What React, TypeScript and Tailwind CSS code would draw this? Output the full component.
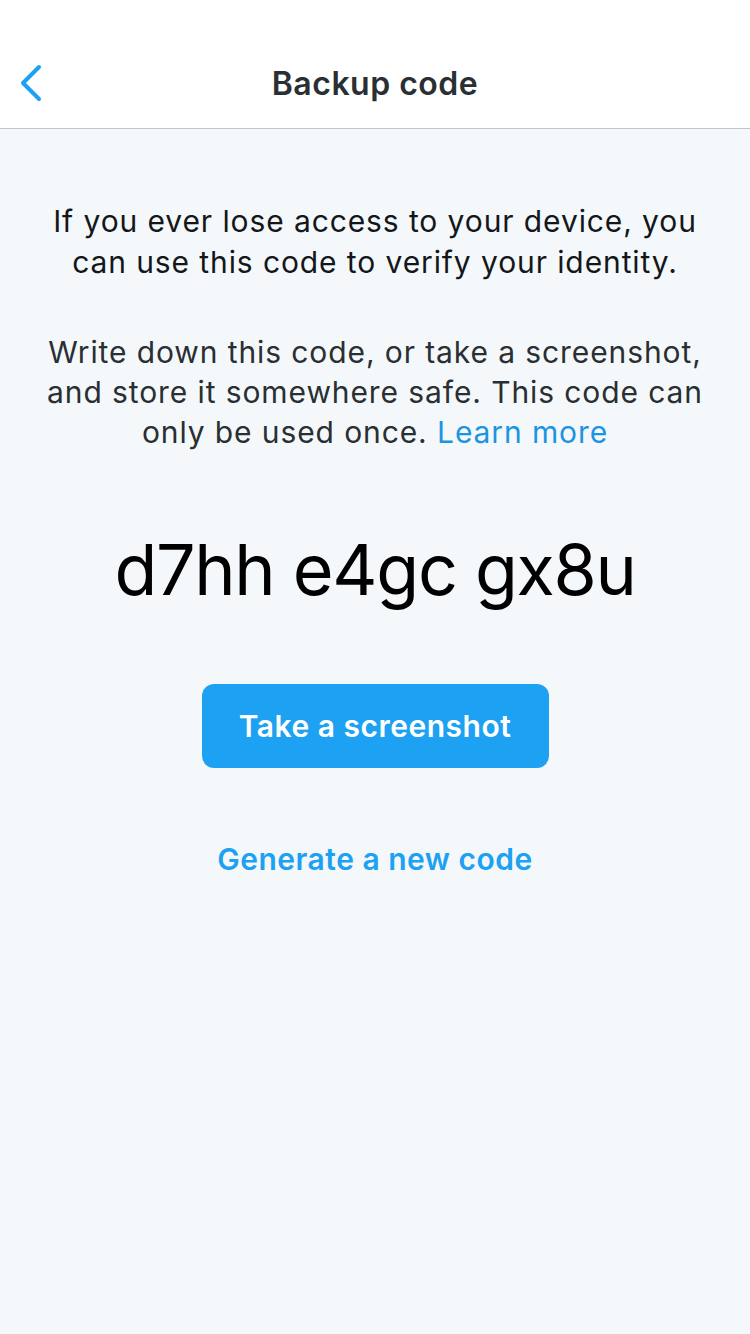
export default function App() {
  return (
    <div className="min-h-[1334px] w-[750px] bg-[#f5f8fa] font-['Inter','Noto_Sans',sans-serif]">
      {/* Nav bar */}
      <header className="relative flex h-[129px] items-end justify-center border-b border-[#bdc6cc] bg-white pb-[24px]">
        <button className="absolute left-[18px] top-[64px] text-[#1da1f2]">
          <svg width="26" height="38" viewBox="0 0 26 38" fill="none">
            <path d="M21 3 L5 19 L21 35" stroke="currentColor" strokeWidth="4" strokeLinecap="round" strokeLinejoin="round" />
          </svg>
        </button>
        <h1 className="text-[32px] font-semibold leading-[40px] tracking-[0.5px] text-[#292f33]">Backup code</h1>
      </header>

      <main className="flex flex-col items-center px-[40px] pt-[72px] text-center tracking-[0.9px]">
        <p className="text-[30px] leading-[41px] text-[#14171a]">
          If you ever lose access to your device, you can use this code to verify your identity.
        </p>
        <p className="mt-[49px] text-[30px] leading-[40px] text-[#292f33]">
          Write down this code, or take a screenshot, and store it somewhere safe. This code can only be used once.{' '}
          <span className="text-[#1b95e0]">Learn more</span>
        </p>

        <div className="mt-[76px] text-[70px] leading-[84px] tracking-[-1.3px] text-black">d7hh e4gc gx8u</div>

        <button className="mt-[72px] h-[84px] w-[347px] rounded-[12px] bg-[#1da1f2] text-[30px] font-semibold tracking-[0.5px] text-white">
          Take a screenshot
        </button>

        <button className="mt-[71px] text-[30px] font-semibold leading-[40px] tracking-[0.5px] text-[#1da1f2]">
          Generate a new code
        </button>
      </main>
    </div>
  )
}
